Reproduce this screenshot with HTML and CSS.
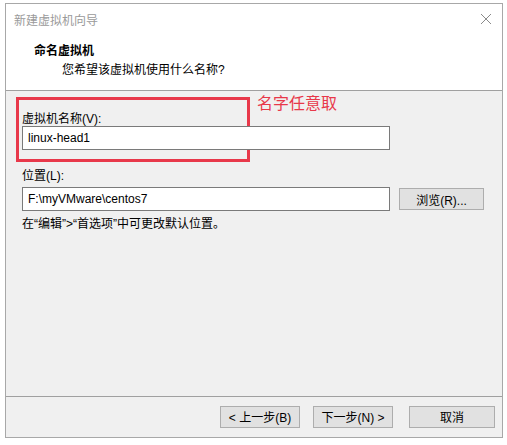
FILE: index.html
```html
<!DOCTYPE html>
<html>
<head>
	<meta charset="utf-8">
	<title>新建虚拟机向导</title>
	<link rel="stylesheet" href="styles.css">
</head>
<body>
	<div class="window">
		<div class="titlebar">
			<span class="title">新建虚拟机向导</span>
			<svg class="close" width="12" height="12" viewBox="0 0 12 12">
				<path d="M1 1L11 11M11 1L1 11" stroke="#8a8a8a" stroke-width="1"/>
			</svg>
		</div>
		<div class="header">
			<div class="heading">命名虚拟机</div>
			<div class="subheading">您希望该虚拟机使用什么名称?</div>
		</div>
		<div class="content">
			<div class="row">
				<div class="highlight">
					<label class="label">虚拟机名称(V):</label>
				</div>
				<span class="note">名字任意取</span>
			</div>
			<div class="field">
				<div class="textbox">linux-head1</div>
			</div>
			<div class="group">
				<label class="label">位置(L):</label>
				<div class="field">
					<div class="textbox">F:\myVMware\centos7</div>
					<button class="btn browse">浏览(R)...</button>
				</div>
				<div class="hint">在“编辑”&gt;“首选项”中可更改默认位置。</div>
			</div>
		</div>
		<div class="footer">
			<button class="btn">&lt; 上一步(B)</button>
			<button class="btn">下一步(N) &gt;</button>
			<button class="btn cancel">取消</button>
		</div>
	</div>
</body>
</html>
```

FILE: styles.css
```css
body,html{
	margin: 0;
	padding: 0;
	background-color: white;
}
*{
	font-family: "Liberation Sans", "Noto Sans CJK SC", sans-serif;
	font-size: 12px;
	box-sizing: border-box;
}
.window{
	margin: 3px 4px 0 5px;
	height: 435px;
	border: 1px solid #a8a8a8;
	display: flex;
	flex-direction: column;
	background-color: #f0f0f0;
}
.titlebar{
	height: 30px;
	background-color: white;
	display: flex;
	align-items: center;
	justify-content: space-between;
	padding: 0 10px 0 8px;
}
.title{
	color: #9a9a9a;
}
.header{
	height: 57px;
	background-color: white;
	border-bottom: 1px solid #a0a0a0;
	padding: 8px 0 0 28px;
}
.heading{
	font-weight: bold;
	line-height: 18px;
}
.subheading{
	padding-left: 28px;
	line-height: 18px;
	margin-top: 1px;
}
.content{
	flex: 1;
	padding: 0 0 0 10px;
	border-bottom: 1px solid #a0a0a0;
}
.row{
	display: flex;
	align-items: flex-start;
	margin-top: 6px;
}
.highlight{
	width: 234px;
	height: 65px;
	border: 3px solid #e8384a;
	padding: 12px 0 0 3px;
}
.note{
	color: #e8384a;
	font-size: 16px;
	margin: -7px 0 0 7px;
}
.label{
	display: block;
	line-height: 14px;
}
.field{
	display: flex;
	align-items: center;
	gap: 9px;
	padding-left: 6px;
}
.row + .field{
	margin-top: -36px;
}
.textbox{
	width: 368px;
	height: 24px;
	border: 1px solid #7a7a7a;
	background-color: white;
	padding: 4px 0 0 5px;
	line-height: 14px;
}
.group{
	margin-top: 19px;
}
.group > .label{
	padding-left: 6px;
	margin-bottom: 4px;
}
.hint{
	padding-left: 6px;
	margin-top: 6px;
	line-height: 14px;
}
.btn{
	height: 22px;
	border: 1px solid #adadad;
	background-color: #e1e1e1;
	padding: 0;
	color: black;
}
.browse{
	width: 85px;
}
.footer{
	height: 40px;
	display: flex;
	align-items: center;
	justify-content: flex-end;
	gap: 13px;
	padding: 0 7px 1px 0;
}
.footer .btn{
	width: 80px;
}
.footer .cancel{
	width: 86px;
	margin-left: 3px;
}
```
